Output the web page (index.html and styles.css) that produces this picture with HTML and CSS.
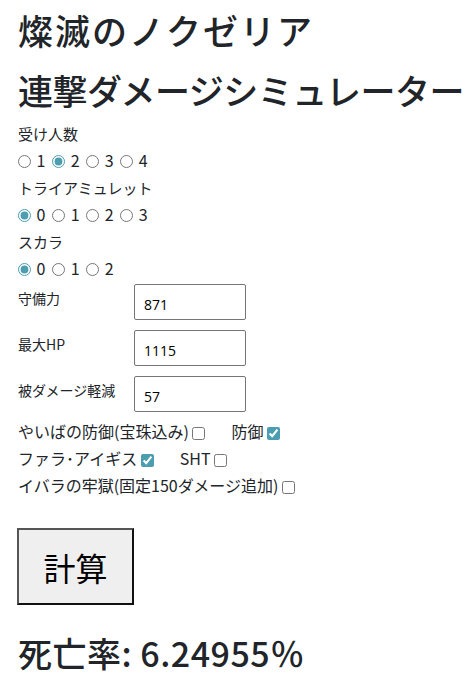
FILE: index.html
```html
<!DOCTYPE html>
<html lang="ja">

<head>
    <meta charset="UTF-8">
    <meta name="viewport" content="width=device-width, initial-scale=1.0">
    <title>燦滅のノクゼリア 連撃ダメージシミュレーター</title>
    <link rel="stylesheet" href="styles.css">
</head>

<body>
    <div class="container">
        <h1 class="title"><span class="title-top">燦滅のノクゼリア</span><br>連撃ダメージシミュレーター</h1>

        <div class="group">
            <div class="group-label">受け人数</div>
            <div class="options">
                <label><input type="radio" name="people" value="1"> 1</label>
                <label><input type="radio" name="people" value="2" checked> 2</label>
                <label><input type="radio" name="people" value="3"> 3</label>
                <label><input type="radio" name="people" value="4"> 4</label>
            </div>
        </div>

        <div class="group">
            <div class="group-label">トライアミュレット</div>
            <div class="options">
                <label><input type="radio" name="amulet" value="0" checked> 0</label>
                <label><input type="radio" name="amulet" value="1"> 1</label>
                <label><input type="radio" name="amulet" value="2"> 2</label>
                <label><input type="radio" name="amulet" value="3"> 3</label>
            </div>
        </div>

        <div class="group">
            <div class="group-label">スカラ</div>
            <div class="options">
                <label><input type="radio" name="scara" value="0" checked> 0</label>
                <label><input type="radio" name="scara" value="1"> 1</label>
                <label><input type="radio" name="scara" value="2"> 2</label>
            </div>
        </div>

        <div class="fields">
            <label class="field-label" for="defense">守備力</label>
            <input id="defense" class="num-input" type="text" value="871">
            <label class="field-label" for="max-hp">最大HP</label>
            <input id="max-hp" class="num-input" type="text" value="1115">
            <label class="field-label" for="reduction">被ダメージ軽減</label>
            <input id="reduction" class="num-input" type="text" value="57">
        </div>

        <div class="checks">
            <div class="check-row">
                <label>やいばの防御(宝珠込み) <input type="checkbox"></label>
                <label>防御 <input type="checkbox" checked></label>
            </div>
            <div class="check-row">
                <label>ファラ･アイギス <input type="checkbox" checked></label>
                <label>SHT <input type="checkbox"></label>
            </div>
            <div class="check-row">
                <label>イバラの牢獄(固定150ダメージ追加) <input type="checkbox"></label>
            </div>
        </div>

        <button id="calc-btn">計算</button>

        <h2 class="result">死亡率: 6.24955％</h2>
    </div>
</body>

</html>
```

FILE: styles.css
```css
body {
    margin: 0;
    color: #212529;
    font-family: "Noto Sans CJK JP", "Open Sans", sans-serif;
    font-size: 16px;
    background: #fff;
}

.container {
    padding: 0 10px 0 18px;
}

.title {
    margin: 0;
    font-size: 35px;
    font-weight: 500;
    line-height: 60px;
    letter-spacing: -0.5px;
    white-space: nowrap;
}

.title-top {
    letter-spacing: 2px;
}

.group-label,
.options {
    line-height: 27px;
}

.group-label {
    font-size: 15px;
}

.options label {
    margin-right: 3px;
}

input[type="radio"],
input[type="checkbox"] {
    accent-color: #4c9daf;
    margin: 0 2px 0 0;
    width: 13px;
    height: 13px;
    vertical-align: -1px;
}

input[type="checkbox"] {
    vertical-align: -2px;
}

.fields {
    display: grid;
    grid-template-columns: 116px 112px;
    row-gap: 10px;
    margin-top: 2px;
}

.field-label {
    font-size: 14px;
    padding-top: 4px;
}

.num-input {
    box-sizing: border-box;
    height: 36px;
    width: 112px;
    border: 1px solid #767676;
    border-radius: 2px;
    padding: 4px 9px 0;
    font-family: "Open Sans", sans-serif;
    font-size: 14px;
    color: #000;
}

.checks {
    margin-top: 6px;
}

.check-row {
    display: flex;
    gap: 24px;
    line-height: 27px;
}

#calc-btn {
    display: block;
    margin: 29px 0 0 -1px;
    width: 117px;
    height: 77px;
    background: #efefef;
    border: 2px solid;
    border-color: #555 #111 #111 #555;
    font-family: inherit;
    font-size: 32px;
    color: #000;
}

.result {
    margin: 18px 0 0;
    font-size: 34px;
    font-weight: 500;
    line-height: 60px;
    letter-spacing: 0.5px;
}
```
